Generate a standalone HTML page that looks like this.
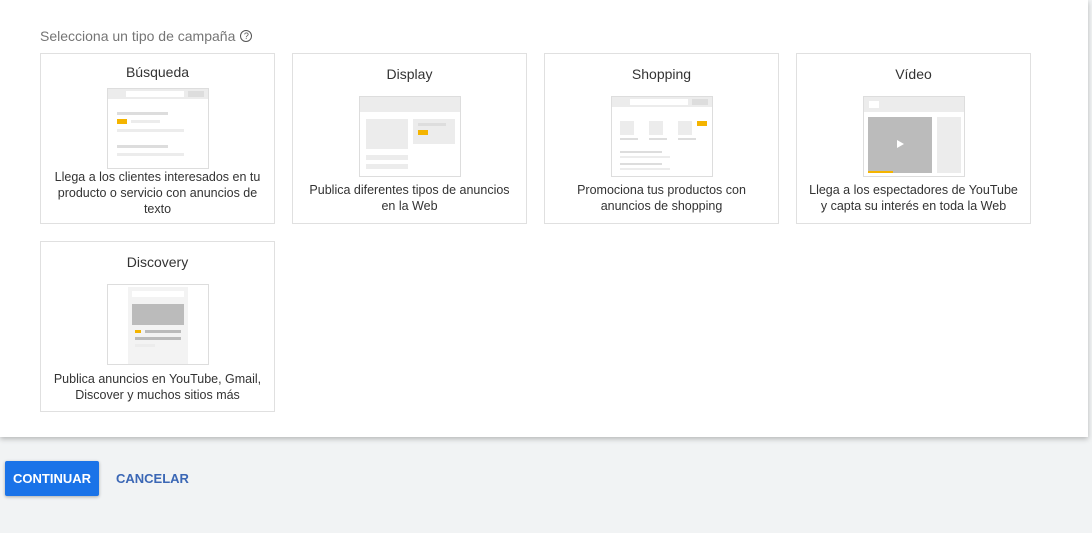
<!DOCTYPE html>
<html><head><meta charset="utf-8"><style>
*{margin:0;padding:0;box-sizing:border-box}
body{width:1092px;height:533px;background:#f1f3f4;font-family:"Liberation Sans",Arial,sans-serif;position:relative;overflow:hidden}
.panel{position:absolute;left:0;top:0;width:1088px;height:437px;background:#fff;box-shadow:0 2px 5px rgba(0,0,0,.25)}
.h{position:absolute;left:40px;top:28px;font-size:14px;color:#757575}
.q{display:inline-block;width:12px;height:12px;border:1.3px solid #555;border-radius:50%;font-size:9px;text-align:center;line-height:10px;color:#555;vertical-align:2px;margin-left:5px}
.card{position:absolute;width:235px;height:171px;border:1px solid #e0e0e0;background:#fff}
.t{position:absolute;left:0;width:100%;text-align:center;font-size:14px;color:#333}
.d{position:absolute;left:0;width:100%;text-align:center;font-size:12.5px;line-height:16px;color:#333}
.ill{position:absolute;width:102px;height:81px;border:1px solid #ddd;background:#fff;overflow:hidden}
.ill div{position:absolute}
.g{background:#ddd}.l{background:#ececec}.y{background:#f4b400}.m{background:#bbb}
.btn{position:absolute;left:5px;top:461px;width:94px;height:35px;background:#1a73e8;color:#fff;font-weight:bold;font-size:13px;text-align:center;line-height:35px;border-radius:2px;box-shadow:0 1px 3px rgba(0,0,0,.3)}
.can{position:absolute;left:116px;top:471px;font-weight:bold;font-size:13px;color:#3b67b5}
</style></head><body>
<div class="panel">
<div class="h">Selecciona un tipo de campaña<span class="q">?</span></div>

<div class="card" style="left:40px;top:53px">
<div class="t" style="top:10px">Búsqueda</div>
<div class="ill" style="left:66px;top:34px">
<div class="l" style="left:0;top:0;width:100px;height:10px"></div>
<div style="left:18px;top:2px;width:58px;height:6px;background:#fff"></div>
<div class="g" style="left:80px;top:2px;width:16px;height:6px"></div>
<div class="g" style="left:9px;top:23px;width:51px;height:3px"></div>
<div class="y" style="left:9px;top:30px;width:10px;height:5px"></div>
<div class="l" style="left:23px;top:31px;width:29px;height:3px"></div>
<div class="l" style="left:9px;top:40px;width:67px;height:3px"></div>
<div class="g" style="left:9px;top:56px;width:51px;height:3px"></div>
<div class="l" style="left:9px;top:64px;width:67px;height:3px"></div>
</div>
<div class="d" style="top:115px">Llega a los clientes interesados en tu<br>producto o servicio con anuncios de<br>texto</div>
</div>

<div class="card" style="left:292px;top:53px">
<div class="t" style="top:12px">Display</div>
<div class="ill" style="left:66px;top:42px">
<div class="l" style="left:0;top:0;width:100px;height:15px"></div>
<div class="l" style="left:6px;top:22px;width:42px;height:30px"></div>
<div class="l" style="left:53px;top:22px;width:42px;height:25px"></div>
<div class="g" style="left:58px;top:26px;width:28px;height:3px"></div>
<div class="y" style="left:58px;top:33px;width:10px;height:5px"></div>
<div class="l" style="left:6px;top:58px;width:42px;height:5px"></div>
<div class="l" style="left:6px;top:67px;width:42px;height:5px"></div>
</div>
<div class="d" style="top:128px">Publica diferentes tipos de anuncios<br>en la Web</div>
</div>

<div class="card" style="left:544px;top:53px">
<div class="t" style="top:12px">Shopping</div>
<div class="ill" style="left:66px;top:42px">
<div class="l" style="left:0;top:0;width:100px;height:10px"></div>
<div style="left:18px;top:2px;width:58px;height:6px;background:#fff"></div>
<div class="g" style="left:80px;top:2px;width:16px;height:6px"></div>
<div class="l" style="left:8px;top:24px;width:14px;height:14px"></div>
<div class="l" style="left:37px;top:24px;width:14px;height:14px"></div>
<div class="l" style="left:66px;top:24px;width:14px;height:14px"></div>
<div class="y" style="left:85px;top:24px;width:10px;height:5px"></div>
<div class="g" style="left:8px;top:41px;width:18px;height:2px"></div>
<div class="g" style="left:37px;top:41px;width:18px;height:2px"></div>
<div class="g" style="left:66px;top:41px;width:18px;height:2px"></div>
<div class="g" style="left:8px;top:54px;width:42px;height:2px"></div>
<div class="l" style="left:8px;top:59px;width:50px;height:2px"></div>
<div class="g" style="left:8px;top:66px;width:42px;height:2px"></div>
<div class="l" style="left:8px;top:71px;width:50px;height:2px"></div>
</div>
<div class="d" style="top:128px">Promociona tus productos con<br>anuncios de shopping</div>
</div>

<div class="card" style="left:796px;top:53px">
<div class="t" style="top:12px">Vídeo</div>
<div class="ill" style="left:66px;top:42px">
<div class="l" style="left:0;top:0;width:100px;height:15px"></div>
<div style="left:5px;top:4px;width:10px;height:7px;background:#fff"></div>
<div class="m" style="left:4px;top:20px;width:64px;height:56px"></div>
<div class="y" style="left:4px;top:74px;width:25px;height:2px"></div>
<div style="left:33px;top:43px;width:0;height:0;border-left:7px solid #fff;border-top:4px solid transparent;border-bottom:4px solid transparent"></div>
<div class="l" style="left:73px;top:20px;width:24px;height:56px"></div>
</div>
<div class="d" style="top:128px">Llega a los espectadores de YouTube<br>y capta su interés en toda la Web</div>
</div>

<div class="card" style="left:40px;top:241px">
<div class="t" style="top:12px">Discovery</div>
<div class="ill" style="left:66px;top:42px">
<div style="left:20px;top:2px;width:60px;height:78px;background:#f3f3f3"></div>
<div style="left:24px;top:6px;width:52px;height:6px;background:#fff"></div>
<div class="m" style="left:24px;top:19px;width:52px;height:21px"></div>
<div class="y" style="left:27px;top:45px;width:6px;height:3px"></div>
<div class="m" style="left:37px;top:45px;width:36px;height:3px"></div>
<div class="m" style="left:27px;top:52px;width:46px;height:3px"></div>
<div class="l" style="left:27px;top:59px;width:20px;height:3px"></div>
</div>
<div class="d" style="top:129px">Publica anuncios en YouTube, Gmail,<br>Discover y muchos sitios más</div>
</div>
</div>
<div class="btn">CONTINUAR</div>
<div class="can">CANCELAR</div>
</body></html>
